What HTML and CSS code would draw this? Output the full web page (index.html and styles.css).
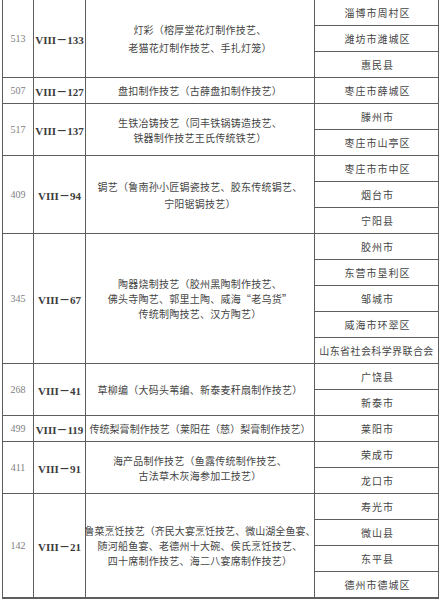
FILE: index.html
```html
<!DOCTYPE html>
<html lang="zh-CN">
<head>
<meta charset="utf-8">
<title>非遗名录</title>
<link rel="stylesheet" href="styles.css">
</head>
<body>
<div class="sheet">
  <div class="num r3">513</div>
  <div class="code r3">VIII－133</div>
  <div class="item r3 loose"><span>灯彩（榕厚堂花灯制作技艺、</span><span>老猫花灯制作技艺、手扎灯笼）</span></div>
  <div class="area">淄博市周村区</div>
  <div class="area">潍坊市潍城区</div>
  <div class="area">惠民县</div>

  <div class="num">507</div>
  <div class="code">VIII－127</div>
  <div class="item"><span>盘扣制作技艺（古薛盘扣制作技艺）</span></div>
  <div class="area">枣庄市薛城区</div>

  <div class="num r2">517</div>
  <div class="code r2">VIII－137</div>
  <div class="item r2"><span>生铁冶铸技艺（同丰铁锅铸造技艺、</span><span>铁器制作技艺王氏传统铁艺）</span></div>
  <div class="area">滕州市</div>
  <div class="area">枣庄市山亭区</div>

  <div class="num r3">409</div>
  <div class="code r3">VIII－94</div>
  <div class="item r3 mid"><span>锔艺（鲁南孙小匠锔瓷技艺、胶东传统锔艺、</span><span>宁阳锯锔技艺）</span></div>
  <div class="area">枣庄市市中区</div>
  <div class="area">烟台市</div>
  <div class="area">宁阳县</div>

  <div class="num r5">345</div>
  <div class="code r5">VIII－67</div>
  <div class="item r5"><span>陶器烧制技艺（胶州黑陶制作技艺、</span><span>佛头寺陶艺、郭里土陶、威海“老乌货”</span><span>传统制陶技艺、汉方陶艺）</span></div>
  <div class="area">胶州市</div>
  <div class="area">东营市垦利区</div>
  <div class="area">邹城市</div>
  <div class="area">威海市环翠区</div>
  <div class="area tight">山东省社会科学界联合会</div>

  <div class="num r2">268</div>
  <div class="code r2">VIII－41</div>
  <div class="item r2"><span>草柳编（大码头苇编、新泰麦秆扇制作技艺）</span></div>
  <div class="area">广饶县</div>
  <div class="area">新泰市</div>

  <div class="num">499</div>
  <div class="code">VIII－119</div>
  <div class="item tight"><span>传统梨膏制作技艺（莱阳茌（慈）梨膏制作技艺）</span></div>
  <div class="area">莱阳市</div>

  <div class="num r2">411</div>
  <div class="code r2">VIII－91</div>
  <div class="item r2"><span>海产品制作技艺（鱼露传统制作技艺、</span><span>古法草木灰海参加工技艺）</span></div>
  <div class="area">荣成市</div>
  <div class="area">龙口市</div>

  <div class="num r4">142</div>
  <div class="code r4">VIII－21</div>
  <div class="item r4"><span class="tight">鲁菜烹饪技艺（齐民大宴烹饪技艺、微山湖全鱼宴、</span><span>随河船鱼宴、老德州十大碗、侯氏烹饪技艺、</span><span>四十席制作技艺、海二八宴席制作技艺）</span></div>
  <div class="area">寿光市</div>
  <div class="area">微山县</div>
  <div class="area">东平县</div>
  <div class="area">德州市德城区</div>
</div>
</body>
</html>
```

FILE: styles.css
```css
html, body {
  margin: 0;
  padding: 0;
  background: #ffffff;
}

body {
  font-family: "Noto Sans CJK SC", "Liberation Serif", serif;
  color: #454545;
}

.sheet {
  display: grid;
  grid-template-columns: 30px 51px 228px 123px;
  grid-auto-rows: 25px;
  gap: 1px;
  width: max-content;
  margin-left: 2px;
  padding: 0 1px 2px 1px;
  background: #5e5e5e;
}

.sheet > div {
  background: #ffffff;
  display: flex;
  align-items: center;
  justify-content: center;
  white-space: nowrap;
}

.r2 { grid-row: span 2; }
.r3 { grid-row: span 3; }
.r4 { grid-row: span 4; }
.r5 { grid-row: span 5; }

.num {
  font-family: "Liberation Serif", serif;
  font-size: 10px;
  color: #808080;
}

.code {
  font-family: "Liberation Serif", "Noto Sans CJK SC", serif;
  font-weight: bold;
  font-size: 11px;
  color: #3c3c3c;
}

.item {
  flex-direction: column;
  font-size: 10px;
  line-height: 15px;
  letter-spacing: 0.25px;
}

.item.loose { line-height: 18px; }
.item.mid { line-height: 17px; }

.area {
  font-size: 10px;
  letter-spacing: 1px;
  padding-left: 2px;
}

.item .tight,
.item.tight { letter-spacing: 0.05px; }

.area.tight { letter-spacing: 0.4px; padding-left: 0; }
```
